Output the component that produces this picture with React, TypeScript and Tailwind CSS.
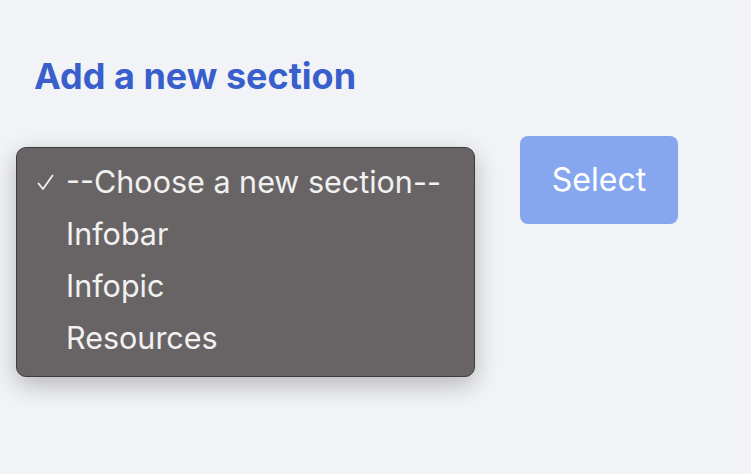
import React from 'react';

const options = ['--Choose a new section--', 'Infobar', 'Infopic', 'Resources'];

export default function App() {
  return (
    <div className="min-h-[474px] w-full bg-[#f2f3f7] px-[34px] pt-[52px] font-['Inter',sans-serif]">
      <h2 className="text-[36px] font-bold leading-[48px] text-[#385fcb]">Add a new section</h2>

      <div className="mt-[47px] flex items-start">
        {/* Menu ouvert */}
        <div className="ml-[-18px] w-[459px] rounded-[10px] border border-[#3f3c3d] bg-[#686465] pb-[12px] pt-[8px] shadow-[0_8px_24px_rgba(0,0,0,0.25)]">
          <ul>
            {options.map((opt, i) => (
              <li key={opt} className="flex h-[52px] items-center text-[30.5px] text-[#f2f1f1]">
                <span className="flex w-[49px] justify-start pl-[20px]">
                  {i === 0 && (
                    <svg width="17" height="17" viewBox="0 0 17 17" fill="none">
                      <path d="M1.5 9.5 L6 15 L15.5 1.5" stroke="#f2f1f1" strokeWidth="1.8" strokeLinecap="round" strokeLinejoin="round" />
                    </svg>
                  )}
                </span>
                <span>{opt}</span>
              </li>
            ))}
          </ul>
        </div>

        <button className="ml-[45px] mt-[-11px] h-[88px] w-[158px] rounded-[8px] bg-[#86a7f0] text-[32px] text-white">
          Select
        </button>
      </div>
    </div>
  );
}
